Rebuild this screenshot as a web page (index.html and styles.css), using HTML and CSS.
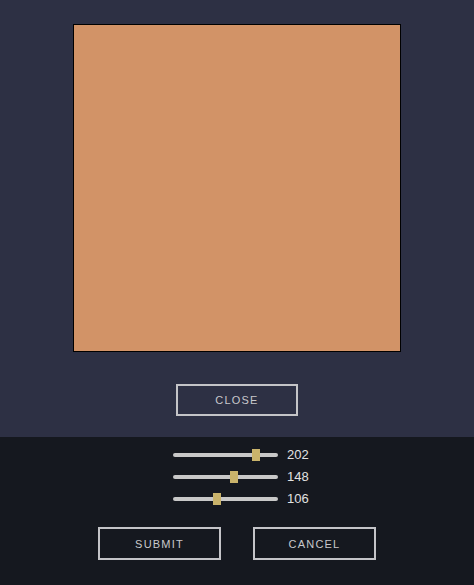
FILE: index.html
```html
<!DOCTYPE html>
<html>
<head>
<meta charset="utf-8">
<link rel="stylesheet" href="styles.css">
</head>
<body>
<div class="top">
  <div class="swatch"></div>
  <button class="btn">CLOSE</button>
</div>
<div class="bottom">
  <div class="sliders">
    <div class="row"><div class="track"><div class="thumb" style="left: 79.2%"></div></div><span class="val">202</span></div>
    <div class="row"><div class="track"><div class="thumb" style="left: 58.0%"></div></div><span class="val">148</span></div>
    <div class="row"><div class="track"><div class="thumb" style="left: 41.6%"></div></div><span class="val">106</span></div>
  </div>
  <div class="actions">
    <button class="btn">SUBMIT</button>
    <button class="btn">CANCEL</button>
  </div>
</div>
</body>
</html>
```
FILE: styles.css
```css
html, body {
  margin: 0;
  padding: 0;
  height: 100%;
}
body {
  display: flex;
  flex-direction: column;
  background: #15181f;
  font-family: "Liberation Sans", Arial, sans-serif;
}
.top {
  background: #2d3044;
  height: 437px;
  display: flex;
  flex-direction: column;
  align-items: center;
  padding-top: 24px;
  box-sizing: border-box;
}
.swatch {
  width: 326px;
  height: 326px;
  border: 1px solid #000;
  background: #d29367;
}
.btn {
  background: transparent;
  border: 2px solid #c4c4c8;
  color: #c8c8cc;
  font-family: "Liberation Sans", Arial, sans-serif;
  font-size: 11px;
  letter-spacing: 1.2px;
  width: 122px;
  height: 32px;
  padding: 0;
  cursor: pointer;
}
.top .btn {
  margin-top: 32px;
}
.bottom {
  flex: 1;
  display: flex;
  flex-direction: column;
  padding-top: 7px;
}
.sliders {
  display: flex;
  flex-direction: column;
  padding-left: 173px;
}
.row {
  height: 22px;
  display: flex;
  align-items: center;
  gap: 9px;
}
.track {
  position: relative;
  width: 105px;
  height: 4px;
  border-radius: 2px;
  background: #c8c8c8;
}
.thumb {
  position: absolute;
  top: -4px;
  width: 8px;
  height: 12px;
  margin-left: -4px;
  background: #c9b36b;
}
.val {
  color: #e2e2e2;
  font-size: 13px;
  margin-top: -2px;
}
.actions {
  display: flex;
  justify-content: center;
  gap: 32px;
  margin-top: 17px;
}
.actions .btn {
  width: 123px;
  height: 33px;
}
```
